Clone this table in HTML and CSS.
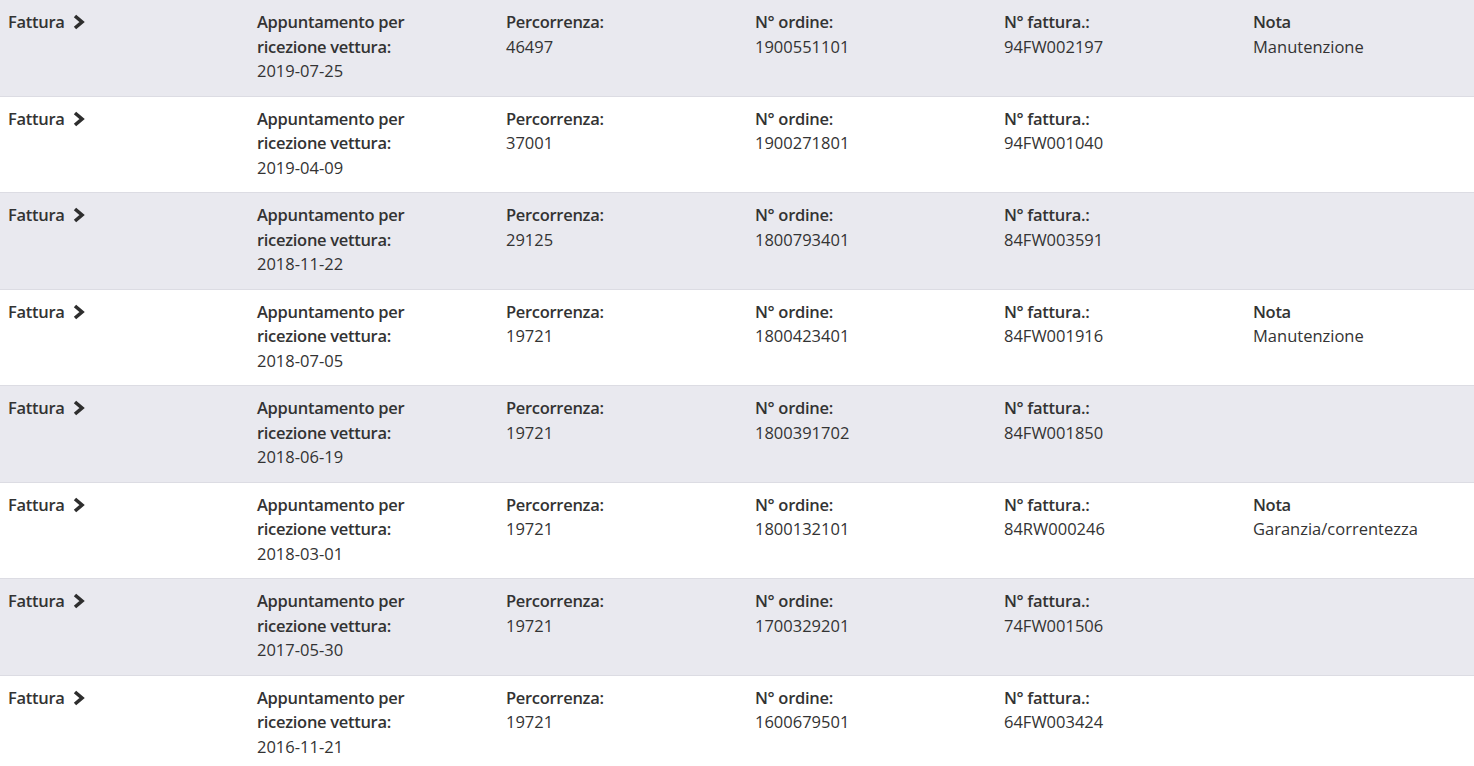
FILE: index.html
```html
<!DOCTYPE html>
<html lang="it">
<head>
<meta charset="utf-8">
<title>Fatture</title>
<link rel="stylesheet" href="styles.css">
</head>
<body>
<div class="list">
  <div class="row shaded">
    <div class="cell"><a class="link" href="#">Fattura <svg class="chev" viewBox="0 0 12 16" width="12" height="16"><polyline points="2,2 9,8 2,14"/></svg></a></div>
    <div class="cell"><div class="label narrow">Appuntamento per ricezione vettura:</div><div class="value">2019-07-25</div></div>
    <div class="cell"><div class="label">Percorrenza:</div><div class="value">46497</div></div>
    <div class="cell"><div class="label">N° ordine:</div><div class="value">1900551101</div></div>
    <div class="cell"><div class="label">N° fattura.:</div><div class="value">94FW002197</div></div>
    <div class="cell"><div class="label">Nota</div><div class="value">Manutenzione</div></div>
  </div>
  <div class="row">
    <div class="cell"><a class="link" href="#">Fattura <svg class="chev" viewBox="0 0 12 16" width="12" height="16"><polyline points="2,2 9,8 2,14"/></svg></a></div>
    <div class="cell"><div class="label narrow">Appuntamento per ricezione vettura:</div><div class="value">2019-04-09</div></div>
    <div class="cell"><div class="label">Percorrenza:</div><div class="value">37001</div></div>
    <div class="cell"><div class="label">N° ordine:</div><div class="value">1900271801</div></div>
    <div class="cell"><div class="label">N° fattura.:</div><div class="value">94FW001040</div></div>
    <div class="cell"></div>
  </div>
  <div class="row shaded">
    <div class="cell"><a class="link" href="#">Fattura <svg class="chev" viewBox="0 0 12 16" width="12" height="16"><polyline points="2,2 9,8 2,14"/></svg></a></div>
    <div class="cell"><div class="label narrow">Appuntamento per ricezione vettura:</div><div class="value">2018-11-22</div></div>
    <div class="cell"><div class="label">Percorrenza:</div><div class="value">29125</div></div>
    <div class="cell"><div class="label">N° ordine:</div><div class="value">1800793401</div></div>
    <div class="cell"><div class="label">N° fattura.:</div><div class="value">84FW003591</div></div>
    <div class="cell"></div>
  </div>
  <div class="row">
    <div class="cell"><a class="link" href="#">Fattura <svg class="chev" viewBox="0 0 12 16" width="12" height="16"><polyline points="2,2 9,8 2,14"/></svg></a></div>
    <div class="cell"><div class="label narrow">Appuntamento per ricezione vettura:</div><div class="value">2018-07-05</div></div>
    <div class="cell"><div class="label">Percorrenza:</div><div class="value">19721</div></div>
    <div class="cell"><div class="label">N° ordine:</div><div class="value">1800423401</div></div>
    <div class="cell"><div class="label">N° fattura.:</div><div class="value">84FW001916</div></div>
    <div class="cell"><div class="label">Nota</div><div class="value">Manutenzione</div></div>
  </div>
  <div class="row shaded">
    <div class="cell"><a class="link" href="#">Fattura <svg class="chev" viewBox="0 0 12 16" width="12" height="16"><polyline points="2,2 9,8 2,14"/></svg></a></div>
    <div class="cell"><div class="label narrow">Appuntamento per ricezione vettura:</div><div class="value">2018-06-19</div></div>
    <div class="cell"><div class="label">Percorrenza:</div><div class="value">19721</div></div>
    <div class="cell"><div class="label">N° ordine:</div><div class="value">1800391702</div></div>
    <div class="cell"><div class="label">N° fattura.:</div><div class="value">84FW001850</div></div>
    <div class="cell"></div>
  </div>
  <div class="row">
    <div class="cell"><a class="link" href="#">Fattura <svg class="chev" viewBox="0 0 12 16" width="12" height="16"><polyline points="2,2 9,8 2,14"/></svg></a></div>
    <div class="cell"><div class="label narrow">Appuntamento per ricezione vettura:</div><div class="value">2018-03-01</div></div>
    <div class="cell"><div class="label">Percorrenza:</div><div class="value">19721</div></div>
    <div class="cell"><div class="label">N° ordine:</div><div class="value">1800132101</div></div>
    <div class="cell"><div class="label">N° fattura.:</div><div class="value">84RW000246</div></div>
    <div class="cell"><div class="label">Nota</div><div class="value">Garanzia/correntezza</div></div>
  </div>
  <div class="row shaded">
    <div class="cell"><a class="link" href="#">Fattura <svg class="chev" viewBox="0 0 12 16" width="12" height="16"><polyline points="2,2 9,8 2,14"/></svg></a></div>
    <div class="cell"><div class="label narrow">Appuntamento per ricezione vettura:</div><div class="value">2017-05-30</div></div>
    <div class="cell"><div class="label">Percorrenza:</div><div class="value">19721</div></div>
    <div class="cell"><div class="label">N° ordine:</div><div class="value">1700329201</div></div>
    <div class="cell"><div class="label">N° fattura.:</div><div class="value">74FW001506</div></div>
    <div class="cell"></div>
  </div>
  <div class="row">
    <div class="cell"><a class="link" href="#">Fattura <svg class="chev" viewBox="0 0 12 16" width="12" height="16"><polyline points="2,2 9,8 2,14"/></svg></a></div>
    <div class="cell"><div class="label narrow">Appuntamento per ricezione vettura:</div><div class="value">2016-11-21</div></div>
    <div class="cell"><div class="label">Percorrenza:</div><div class="value">19721</div></div>
    <div class="cell"><div class="label">N° ordine:</div><div class="value">1600679501</div></div>
    <div class="cell"><div class="label">N° fattura.:</div><div class="value">64FW003424</div></div>
    <div class="cell"></div>
  </div>
</div>
</body>
</html>
```
FILE: styles.css
```css
html, body {
  margin: 0;
  padding: 0;
  background: #ffffff;
}
body {
  font-family: "Open Sans", "Noto Sans", "Liberation Sans", sans-serif;
  font-size: 16.5px;
  line-height: 24.7px;
  color: #333333;
}
.list {
  display: flex;
  flex-direction: column;
}
.row {
  display: grid;
  grid-template-columns: repeat(5, 249px) 1fr;
  box-sizing: border-box;
  height: 96.5px;
  padding: 10px 0 0 8px;
  border-bottom: 1px solid #dcdce3;
  background: #ffffff;
}
.row.shaded {
  background: #e9e9ef;
}
.cell {
  min-width: 0;
}
.link {
  display: inline-flex;
  align-items: center;
  gap: 8px;
  color: #333333;
  font-weight: 600;
  letter-spacing: -0.3px;
  text-decoration: none;
}
.chev {
  display: block;
  fill: none;
  stroke: #2e2e2e;
  stroke-width: 3.6;
  stroke-linecap: butt;
  stroke-linejoin: miter;
}
.label {
  font-weight: 600;
  letter-spacing: -0.3px;
}
.label.narrow {
  max-width: 170px;
}
.value {
  font-weight: 400;
}
```
